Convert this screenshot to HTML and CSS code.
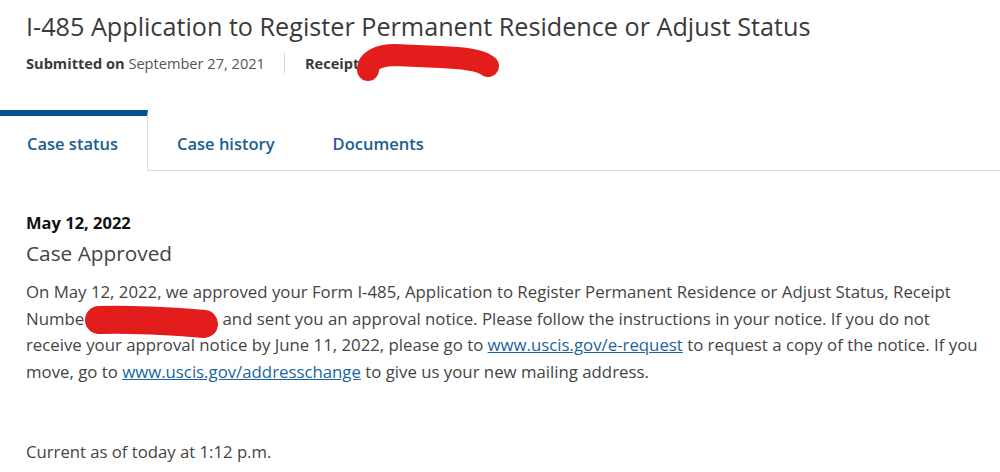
FILE: index.html
```html
<!DOCTYPE html>
<html lang="en">
<head>
<meta charset="utf-8">
<title>Case status</title>
<link rel="stylesheet" href="styles.css">
</head>
<body>
<header class="case-header">
  <h1 class="case-title">I-485 Application to Register Permanent Residence or Adjust Status</h1>
  <div class="case-meta">
    <span class="meta-item"><b>Submitted on</b> September 27, 2021</span>
    <span class="meta-sep"></span>
    <span class="meta-item"><b>Receipt</b></span>
  </div>
  <svg class="redact redact-top" width="150" height="44" viewBox="0 0 150 44"><path d="M18 30 C18 20 30 15 45 15 L90 17 C115 18 130 20 138 26" fill="none" stroke="#e31c1c" stroke-width="22" stroke-linecap="round"/></svg>
</header>
<nav class="tabs">
  <a class="tab active">Case status</a>
  <a class="tab">Case history</a>
  <a class="tab">Documents</a>
  <span class="tab-fill"></span>
</nav>
<main class="status">
  <div class="status-date">May 12, 2022</div>
  <h2 class="status-title">Case Approved</h2>
  <p class="status-text">On May 12, 2022, we approved your Form I-485, Application to Register Permanent Residence or Adjust Status, Receipt <span class="nowrap">Numbe<span class="redact-gap"><svg class="redact redact-body" width="140" height="40" viewBox="0 0 140 40"><path d="M14 17 C40 16 90 18 119 21" fill="none" stroke="#e31c1c" stroke-width="28" stroke-linecap="round"/></svg></span></span> and sent you an approval notice. Please follow the instructions in your notice. If you do not receive your approval notice by June 11, 2022, please go to <a href="#">www.uscis.gov/e-request</a> to request a copy of the notice. If you move, go to <a href="#">www.uscis.gov/addresschange</a> to give us your new mailing address.</p>
  <p class="status-current">Current as of today at 1:12 p.m.</p>
</main>
</body>
</html>
```

FILE: styles.css
```css
* { box-sizing: border-box; }
html, body { margin: 0; padding: 0; background: #fff; }
body {
  font-family: "Open Sans", "Liberation Sans", sans-serif;
  color: #333;
  width: 1000px;
  height: 472px;
  overflow: hidden;
}
.case-header { position: relative; padding: 8px 0 0 26px; }
.case-title {
  margin: 0;
  font-weight: 400;
  font-size: 25.2px;
  line-height: 36px;
  color: #3a3a3a;
}
.case-meta {
  display: flex;
  align-items: center;
  margin-top: 8px;
  font-size: 14.6px;
  color: #555;
  height: 22px;
}
.case-meta b { color: #3a3a3a; font-weight: 700; }
.meta-sep {
  width: 1px;
  height: 20px;
  background: #d6d6d6;
  margin: 0 20px 0 19px;
}
.redact { position: absolute; }
.redact-top { left: 350px; top: 40px; }
.tabs {
  display: flex;
  margin-top: 36px;
  height: 61px;
}
.tab {
  white-space: nowrap;
  font-size: 16.5px;
  font-weight: 600;
  color: #1a5e91;
  padding: 22px 29px 0 29px;
  border-bottom: 1px solid #dcdcdc;
}
.tab.active {
  flex: 0 0 148px;
  padding-left: 27px;
  border-top: 6px solid #00558f;
  border-right: 1px solid #dcdcdc;
  border-bottom: 0;
  padding-top: 16px;
}
.tab-fill { flex: 1; border-bottom: 1px solid #dcdcdc; }
.status { padding: 40px 16px 0 26px; }
.status-date {
  font-size: 16.5px;
  font-weight: 700;
  color: #111;
  line-height: 24px;
}
.status-title {
  margin: 4px 0 0;
  font-size: 20.8px;
  font-weight: 400;
  color: #444;
  line-height: 28px;
}
.status-text {
  margin: 12px 0 0;
  font-size: 16.8px;
  line-height: 26.7px;
  color: #444;
}
.status-text a { color: #1b64a0; text-decoration: underline; }
.nowrap { white-space: nowrap; }
.redact-gap { position: relative; display: inline-block; width: 134px; height: 1px; }
.redact-body { left: 1px; top: -21px; }
.status-current {
  margin: 53px 0 0;
  font-size: 16.7px;
  line-height: 26px;
  color: #444;
}
```
